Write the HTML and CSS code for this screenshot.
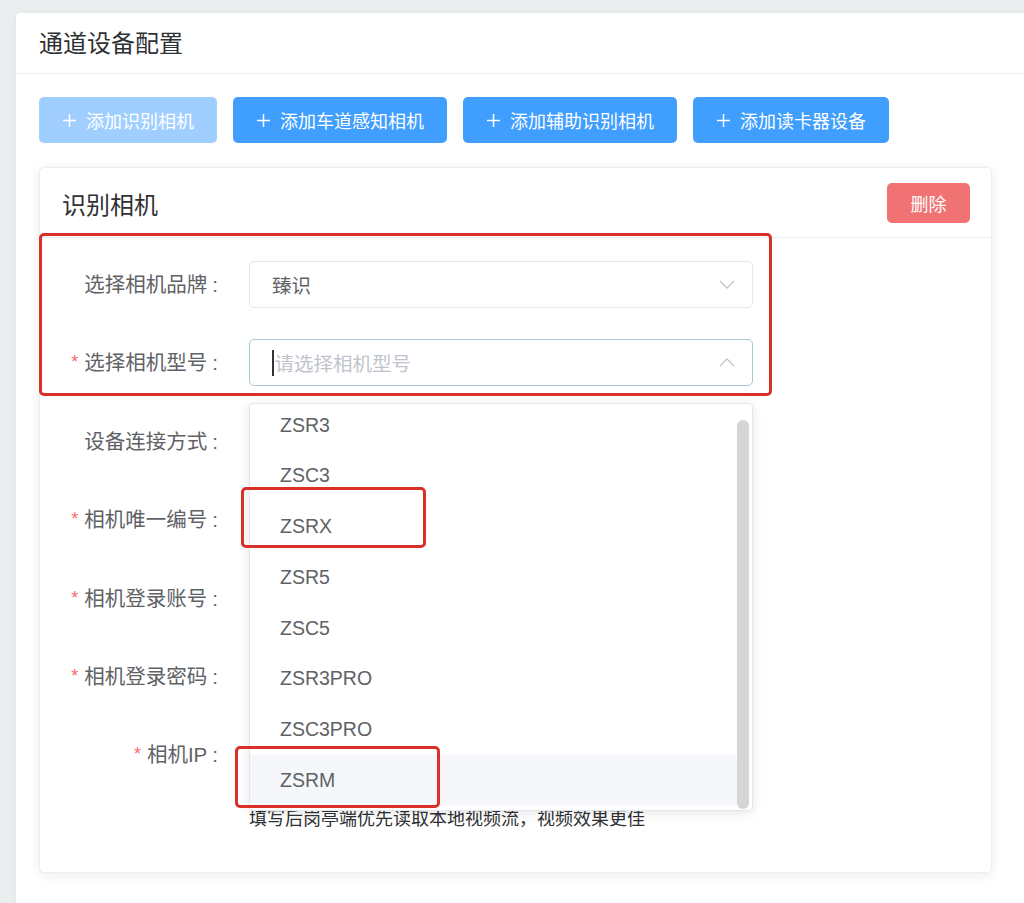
FILE: index.html
```html
<!DOCTYPE html>
<html lang="zh-CN">
<head>
  <meta charset="UTF-8">
  <meta name="viewport" content="width=device-width, initial-scale=1.0">
  <title>通道设备配置</title>
  <link rel="stylesheet" href="styles.css">
</head>
<body>
  <!-- Panel principal -->
  <div class="panel">
    <div class="panel-head">通道设备配置</div>

    <div class="panel-body">
      <!-- Botones para añadir dispositivos -->
      <div class="toolbar">
        <button class="btn btn-primary is-disabled">
          <svg class="icon-plus" viewBox="0 0 15 15"><path d="M7.5 1v13M1 7.5h13"/></svg>
          <span>添加识别相机</span>
        </button>
        <button class="btn btn-primary">
          <svg class="icon-plus" viewBox="0 0 15 15"><path d="M7.5 1v13M1 7.5h13"/></svg>
          <span>添加车道感知相机</span>
        </button>
        <button class="btn btn-primary">
          <svg class="icon-plus" viewBox="0 0 15 15"><path d="M7.5 1v13M1 7.5h13"/></svg>
          <span>添加辅助识别相机</span>
        </button>
        <button class="btn btn-primary">
          <svg class="icon-plus" viewBox="0 0 15 15"><path d="M7.5 1v13M1 7.5h13"/></svg>
          <span>添加读卡器设备</span>
        </button>
      </div>

      <!-- Tarjeta: cámara de reconocimiento -->
      <div class="device-card">
        <div class="device-head">
          <span class="device-title">识别相机</span>
          <button class="btn-delete">删除</button>
        </div>

        <div class="device-form">
          <div class="form-row">
            <label class="form-label">选择相机品牌<span class="colon">:</span></label>
            <div class="form-control">
              <div class="select">
                <span class="select-value">臻识</span>
                <svg class="select-arrow" viewBox="0 0 16 9"><path d="M1 1l7 7 7-7"/></svg>
              </div>
            </div>
          </div>

          <div class="form-row">
            <label class="form-label"><span class="required">*</span>选择相机型号<span class="colon">:</span></label>
            <div class="form-control">
              <div class="select is-focus">
                <span class="select-placeholder"><span class="caret"></span>请选择相机型号</span>
                <svg class="select-arrow" viewBox="0 0 16 9"><path d="M1 8l7-7 7 7"/></svg>

                <!-- Desplegable abierto -->
                <div class="dropdown">
                  <ul class="dropdown-list">
                    <li class="dropdown-item">ZSR3</li>
                    <li class="dropdown-item">ZSC3</li>
                    <li class="dropdown-item">ZSRX</li>
                    <li class="dropdown-item">ZSR5</li>
                    <li class="dropdown-item">ZSC5</li>
                    <li class="dropdown-item">ZSR3PRO</li>
                    <li class="dropdown-item">ZSC3PRO</li>
                    <li class="dropdown-item is-hover">ZSRM</li>
                  </ul>
                  <div class="dropdown-scrollbar"></div>
                </div>
              </div>
            </div>
          </div>

          <div class="form-row">
            <label class="form-label">设备连接方式<span class="colon">:</span></label>
            <div class="form-control"><div class="select"></div></div>
          </div>

          <div class="form-row">
            <label class="form-label"><span class="required">*</span>相机唯一编号<span class="colon">:</span></label>
            <div class="form-control"><div class="input"></div></div>
          </div>

          <div class="form-row">
            <label class="form-label"><span class="required">*</span>相机登录账号<span class="colon">:</span></label>
            <div class="form-control"><div class="input"></div></div>
          </div>

          <div class="form-row">
            <label class="form-label"><span class="required">*</span>相机登录密码<span class="colon">:</span></label>
            <div class="form-control"><div class="input"></div></div>
          </div>

          <div class="form-row">
            <label class="form-label"><span class="required">*</span>相机IP<span class="colon">:</span></label>
            <div class="form-control">
              <div class="input"></div>
              <p class="form-hint">填写后岗亭端优先读取本地视频流，视频效果更佳</p>
            </div>
          </div>
        </div>

        <!-- Marcas rojas de anotación -->
        <div class="mark mark-form"></div>
        <div class="mark mark-zsrx"></div>
        <div class="mark mark-zsrm"></div>
      </div>
    </div>
  </div>
</body>
</html>
```

FILE: styles.css
```css
/* ────────────────────────────────── */
/* RESET BÁSICO */
* {
  margin: 0;
  padding: 0;
  box-sizing: border-box;
}

body {
  font-family: "Liberation Sans", "Noto Sans CJK SC", sans-serif;
  background-color: #eaeeef;
  color: #606266;
  padding: 13px 0 0 16px;
  height: 903px;
  overflow: hidden;
}

/* ────────────────────────────────── */
/* PANEL */
.panel {
  width: 1030px;
  min-height: 900px;
  background-color: #fff;
  border-radius: 4px 0 0 0;
  box-shadow: 0 1px 6px rgba(0, 0, 0, 0.06);
}

.panel-head {
  height: 61px;
  line-height: 62px;
  padding-left: 23px;
  font-size: 24px;
  color: #303133;
  border-bottom: 1px solid #ebeef5;
}

.panel-body {
  padding: 23px 0 0 23px;
}

/* ────────────────────────────────── */
/* BOTONES */
.toolbar {
  display: flex;
  gap: 16px;
  margin-bottom: 24px;
}

.btn {
  display: inline-flex;
  align-items: center;
  gap: 9px;
  height: 46px;
  padding: 0 23px;
  border: none;
  border-radius: 5px;
  font-family: inherit;
  font-size: 18px;
  color: #fff;
}
.btn-primary {
  background-color: #409eff;
}
.btn-primary.is-disabled {
  background-color: #a0cfff;
}

.icon-plus {
  width: 15px;
  height: 15px;
  fill: none;
  stroke: #fff;
  stroke-width: 1.5;
}

/* ────────────────────────────────── */
/* TARJETA DEL DISPOSITIVO */
.device-card {
  position: relative;
  width: 953px;
  background-color: #fff;
  border: 1px solid #ebeef5;
  border-radius: 5px;
  box-shadow: 0 2px 12px rgba(0, 0, 0, 0.08);
}

.device-head {
  display: flex;
  align-items: center;
  justify-content: space-between;
  height: 70px;
  padding: 0 21px 0 22px;
  border-bottom: 1px solid #ebeef5;
}
.device-title {
  font-size: 24px;
  color: #303133;
  padding-top: 2px;
}
.btn-delete {
  width: 83px;
  height: 40px;
  border: none;
  border-radius: 5px;
  background-color: #f07272;
  color: #fff;
  font-family: inherit;
  font-size: 18px;
}

/* ────────────────────────────────── */
/* FORMULARIO */
.device-form {
  display: flex;
  flex-direction: column;
  gap: 31.4px;
  padding: 23px 0 40px 0;
}

.form-row {
  display: flex;
  align-items: flex-start;
}

.form-label {
  width: 209px;
  height: 47px;
  flex-shrink: 0;
  padding-right: 31px;
  line-height: 47px;
  text-align: right;
  font-size: 20.5px;
  color: #606266;
  white-space: nowrap;
}
.colon {
  margin-left: 5px;
}

.required {
  color: #f56c6c;
  font-size: 18px;
  margin-right: 6px;
  position: relative;
  top: -2px;
}

.form-control {
  width: 504px;
}

.select,
.input {
  position: relative;
  display: flex;
  align-items: center;
  justify-content: space-between;
  height: 47px;
  padding: 0 17px 0 22px;
  border: 1px solid #e4e7ed;
  border-radius: 5px;
  font-size: 19.5px;
  background-color: #fff;
}
.select.is-focus {
  border-color: #a7c9cf;
}

.select-value {
  color: #606266;
}

.select-placeholder {
  display: flex;
  align-items: center;
  color: #c0c4cc;
}
.caret {
  display: inline-block;
  width: 1.5px;
  height: 26px;
  margin-right: 1px;
  background-color: #333;
}

.select-arrow {
  width: 16px;
  height: 9px;
  fill: none;
  stroke: #c0c4cc;
  stroke-width: 1.3;
}

.form-hint {
  margin-top: 28px;
  line-height: 26px;
  font-size: 18px;
  color: #303133;
  white-space: nowrap;
}

/* ────────────────────────────────── */
/* DESPLEGABLE */
.dropdown {
  position: absolute;
  top: calc(100% + 18px);
  left: -1px;
  right: -1px;
  height: 408px;
  overflow: hidden;
  background-color: #fff;
  border: 1px solid #e4e7ed;
  border-radius: 4px;
  box-shadow: 0 2px 12px rgba(0, 0, 0, 0.1);
  z-index: 10;
}

.dropdown-list {
  list-style: none;
  margin-top: -4.6px;
  margin-right: 15px;
}

.dropdown-item {
  height: 50.7px;
  line-height: 50.7px;
  padding-left: 30px;
  font-size: 19.5px;
  color: #606266;
}
.dropdown-item.is-hover {
  background-color: #f5f7fa;
}

.dropdown-scrollbar {
  position: absolute;
  top: 16px;
  right: 3px;
  bottom: 1px;
  width: 12px;
  border-radius: 6px;
  background-color: #d3d5d6;
}

/* ────────────────────────────────── */
/* MARCAS ROJAS */
.mark {
  position: absolute;
  border: 3px solid #d9302a;
  border-radius: 5px;
  z-index: 20;
  pointer-events: none;
}
.mark-form {
  left: -1px;
  top: 65px;
  width: 733px;
  height: 163px;
}
.mark-zsrx {
  left: 201px;
  top: 319px;
  width: 185px;
  height: 61px;
}
.mark-zsrm {
  left: 195px;
  top: 578px;
  width: 205px;
  height: 62px;
}
```
